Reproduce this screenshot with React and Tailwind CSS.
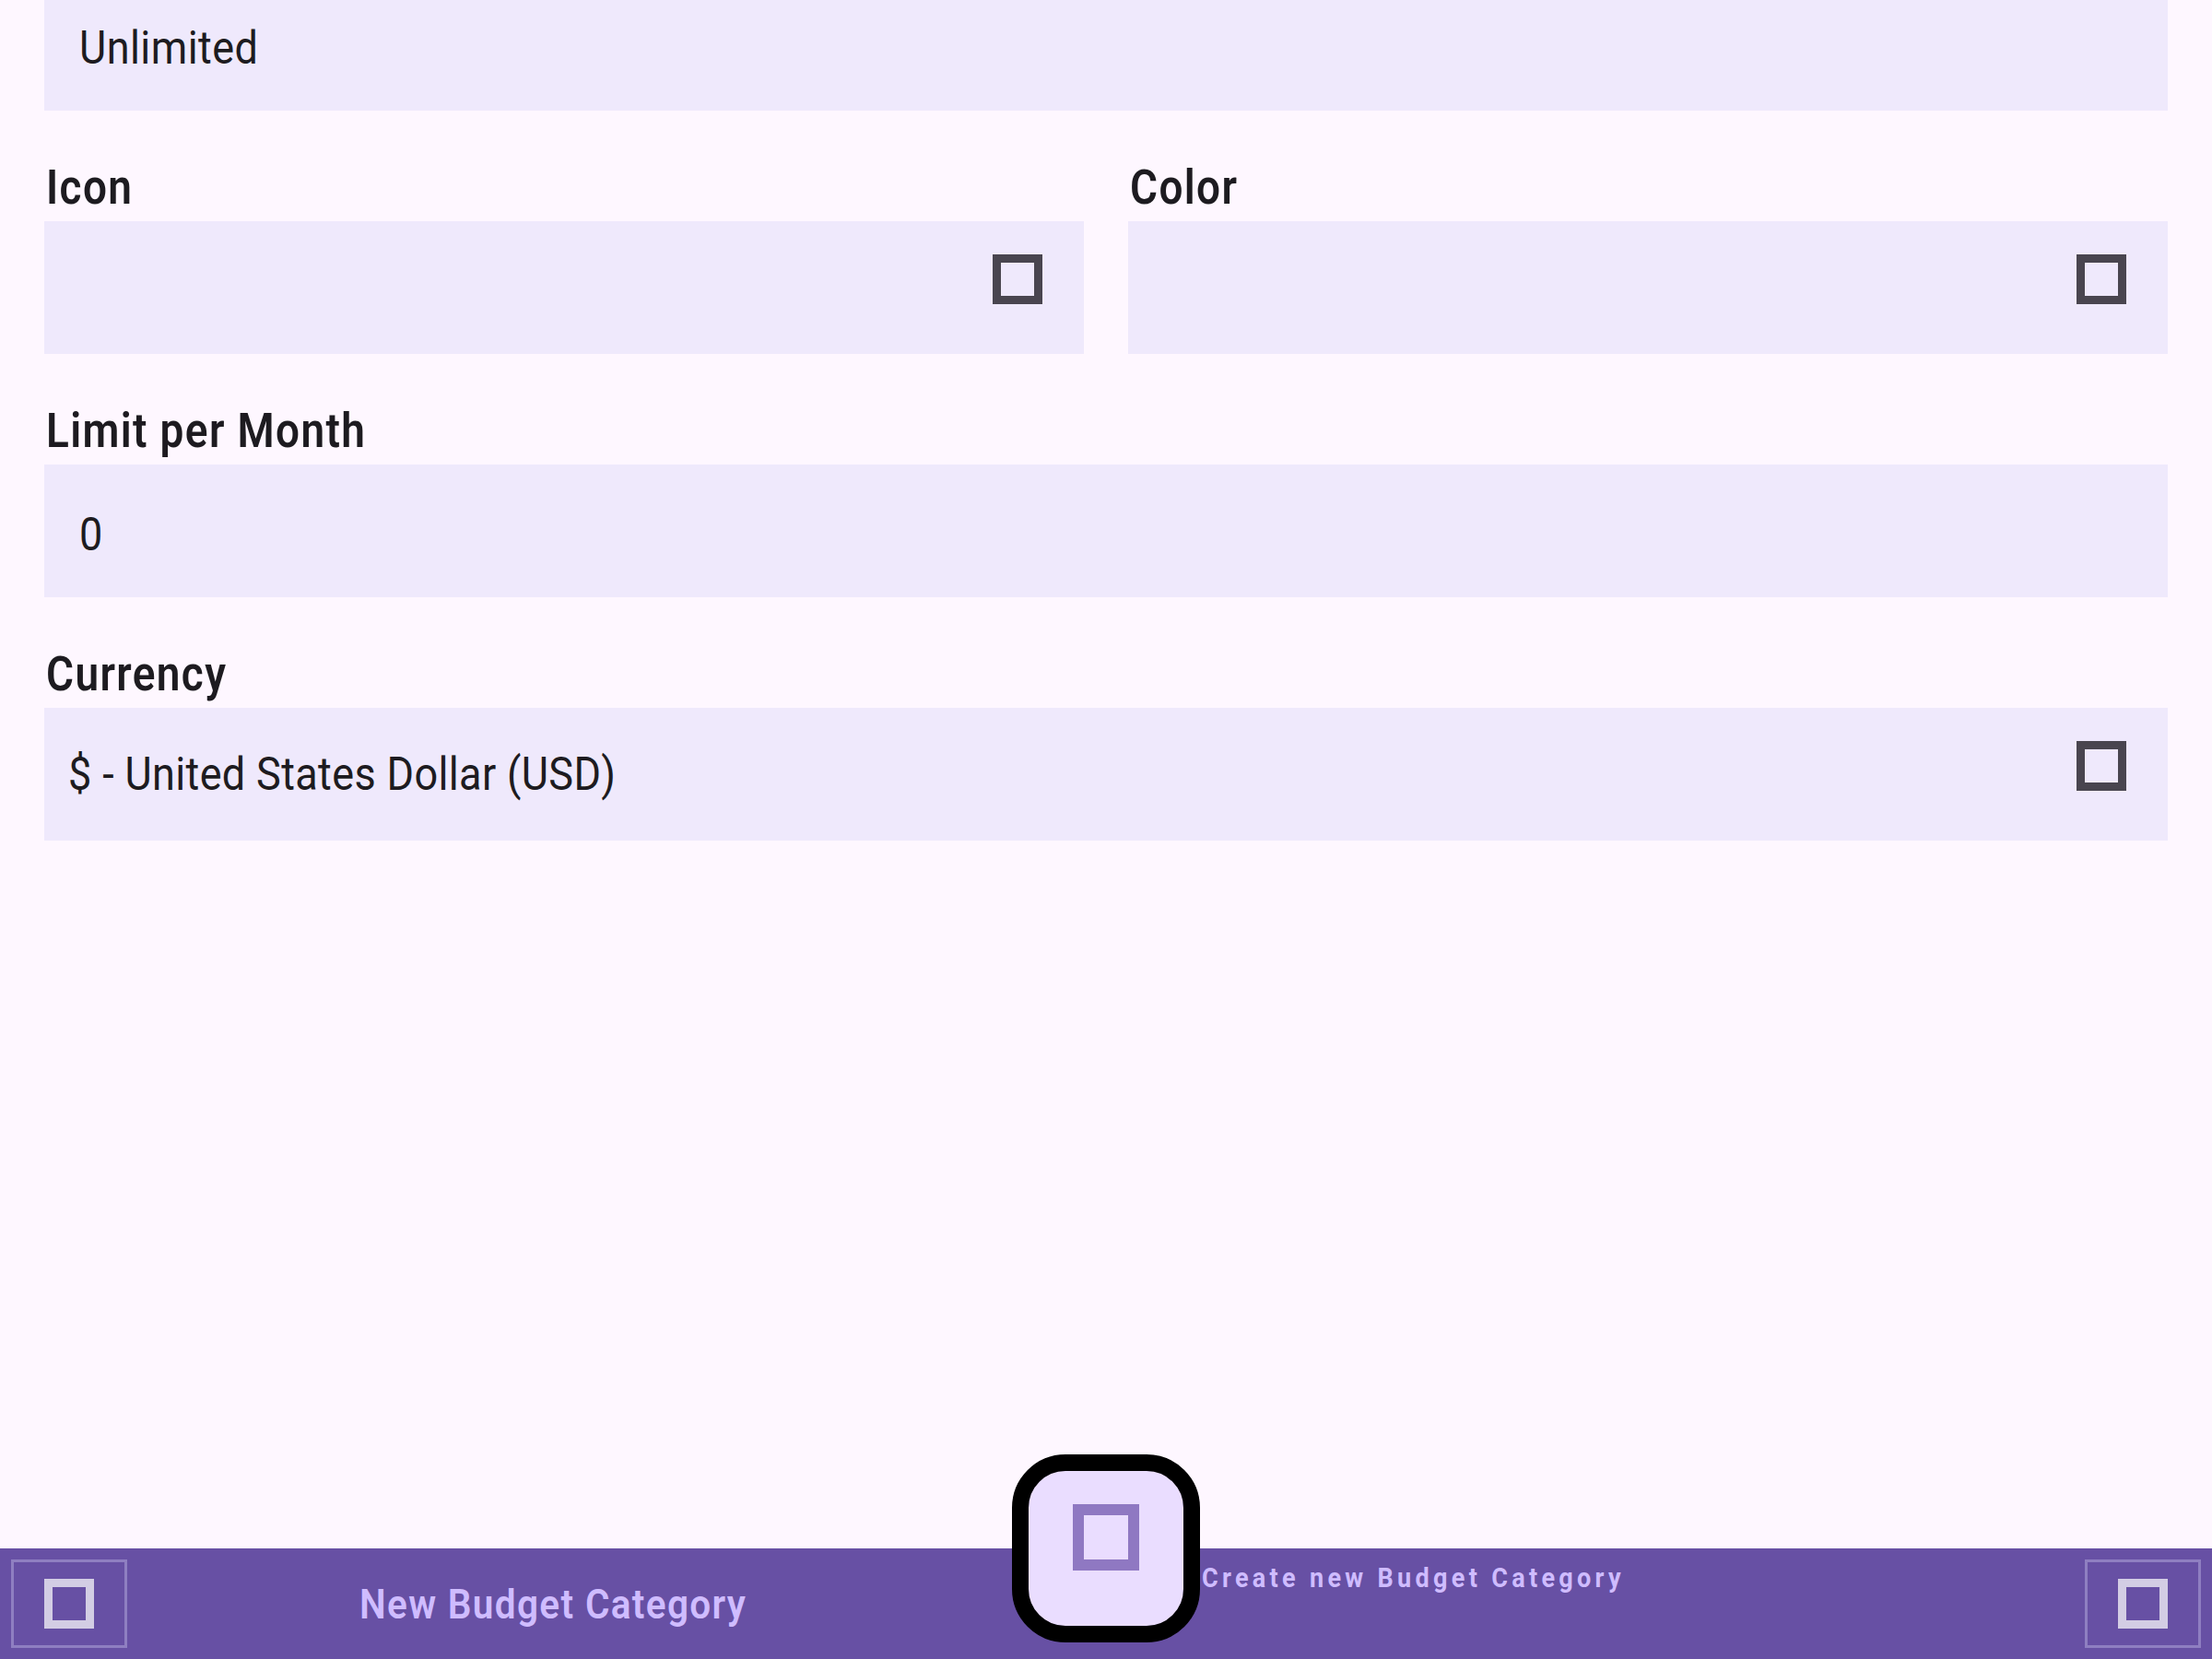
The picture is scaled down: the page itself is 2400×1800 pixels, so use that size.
import React from 'react'

// Missing-glyph box that the app shows in place of icons
const Tofu = ({ className = '' }) => (
  <div className={`w-[54px] h-[54px] border-[9px] ${className}`} />
)

const Label = ({ children }) => (
  <div className="h-[72px] leading-[72px] text-[51px] font-semibold tracking-[0.03em] text-[#1d1b20] pl-[2px]">
    <span className="inline-block scale-x-90 origin-left">{children}</span>
  </div>
)

const TextField = ({ value }) => (
  <div className="h-[144px] bg-[#efe9fc] flex items-center pl-[38px] pt-[8px] text-[50px] text-[#1d1b20] tracking-[0.01em]">
    <span className="inline-block scale-x-90 origin-left">{value}</span>
  </div>
)

const SelectField = ({ value }) => (
  <div className="h-[144px] bg-[#efe9fc] flex items-start pr-[45px]">
    {value ? (
      <div className="self-center pl-[26px] text-[50px] text-[#1d1b20] tracking-[0.4px]">
        <span className="inline-block scale-x-90 origin-left">{value}</span>
      </div>
    ) : null}
    <Tofu className="ml-auto mt-[36px] border-[#49454f]" />
  </div>
)

export default function App() {
  return (
    <div className="min-h-screen bg-[#fef7ff] flex flex-col font-['Roboto',sans-serif] overflow-hidden">
      <div className="px-12 -mt-[24px] flex flex-col">
        <TextField value="Unlimited" />

        <div className="mt-12 grid grid-cols-2 gap-12">
          <div>
            <Label>Icon</Label>
            <SelectField />
          </div>
          <div>
            <Label>Color</Label>
            <SelectField />
          </div>
        </div>

        <div className="mt-12">
          <Label>Limit per Month</Label>
          <TextField value="0" />
        </div>

        <div className="mt-12">
          <Label>Currency</Label>
          <SelectField value="$ - United States Dollar (USD)" />
        </div>
      </div>

      {/* bottom app bar */}
      <div className="mt-auto h-[120px] bg-[#6750a4] relative flex items-center px-3">
        <button className="w-[126px] h-[96px] border-[3px] border-[#8f7fc1] flex items-center justify-center">
          <Tofu className="border-[#d3cde4]" />
        </button>
        <span className="ml-[252px] text-[45px] font-semibold tracking-[1.5px] text-[#cfbcff] pt-[2px] scale-x-90 origin-left">
          New Budget Category
        </span>
        <button className="ml-auto w-[126px] h-[96px] border-[3px] border-[#8f7fc1] flex items-center justify-center">
          <Tofu className="border-[#d3cde4]" />
        </button>

        {/* docked FAB */}
        <div className="absolute left-[1098px] top-[-102px] w-[204px] h-[204px] rounded-[58px] border-[18px] border-black bg-[#eaddff] flex items-center justify-center pb-[24px]">
          <div className="w-[72px] h-[72px] border-[12px] border-[#8f78c2]" />
        </div>
        <span className="absolute left-[1304px] top-[9px] text-[30px] font-bold tracking-[0.16em] text-[#cfbcff] scale-x-90 origin-left">
          Create new Budget Category
        </span>
      </div>
    </div>
  )
}
